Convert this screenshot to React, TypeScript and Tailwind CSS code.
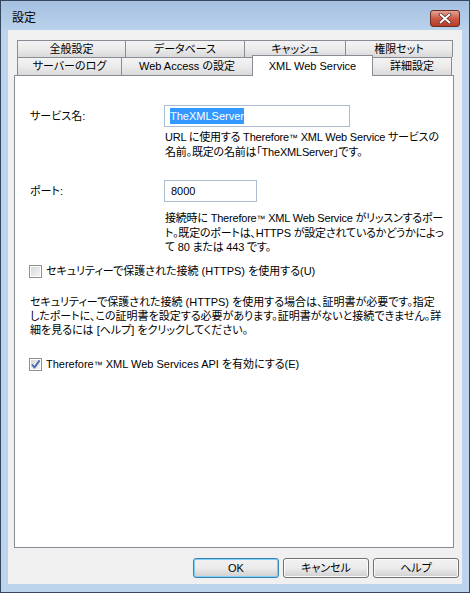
import React from 'react'

const font = { fontFamily: '"Liberation Sans", "Noto Sans CJK JP", sans-serif' }

type Tab = { label: string; w: string; selected?: boolean; last?: boolean }

const row1: Tab[] = [
  { label: '全般設定', w: 'w-[108px]' },
  { label: 'データベース', w: 'w-[119px]' },
  { label: 'キャッシュ', w: 'w-[101px]' },
  { label: '権限セット', w: 'w-[108px]', last: true },
]

const row2: Tab[] = [
  { label: 'サーバーのログ', w: 'w-[104px]' },
  { label: 'Web Access の設定', w: 'w-[131px]' },
  { label: 'XML Web Service', w: 'w-[121px]', selected: true },
  { label: '詳細設定', w: 'w-[80px]', last: true },
]

function TabButton({ tab, h }: { tab: Tab; h: string }) {
  if (tab.selected) {
    return (
      <div
        className={`${tab.w} h-[21px] -mb-px -mr-px relative z-10 flex items-center justify-center border-t border-l border-r border-[#898c95] bg-white text-[11px] text-black`}
      >
        {tab.label}
      </div>
    )
  }
  return (
    <div
      className={`${tab.w} ${h} flex items-center justify-center border-t border-l border-[#898c95] ${tab.last ? 'border-r' : ''} bg-gradient-to-b from-[#f3f3f3] via-[#ebebeb] to-[#d9d9d9] text-[11px] text-black`}
    >
      {tab.label}
    </div>
  )
}

function Checkbox({ checked }: { checked?: boolean }) {
  return (
    <div className="w-[13px] h-[13px] border border-[#8f8f8f] bg-white p-px shrink-0">
      <div className="w-full h-full bg-gradient-to-br from-[#d9d9d9] to-[#f4f4f4] relative">
        {checked && (
          <svg viewBox="0 0 11 11" className="absolute -left-px -top-px w-[11px] h-[11px]">
            <path d="M2 5.5 L4.5 8.5 L9.5 1.5" fill="none" stroke="#2b4f8f" strokeWidth="1.8" strokeLinejoin="round" />
            <path d="M2 5.5 L4.5 8.5 L9.5 1.5" fill="none" stroke="#5b8fd6" strokeWidth="0.8" />
          </svg>
        )}
      </div>
    </div>
  )
}

function DialogButton({ label, primary }: { label: string; primary?: boolean }) {
  return (
    <div
      className={`w-[86px] h-[20px] rounded-[3px] border ${primary ? 'border-[#3c7fb1] shadow-[inset_0_0_0_1px_#7fd0f7]' : 'border-[#707070] shadow-[inset_0_0_0_1px_#fcfcfc]'} bg-gradient-to-b from-[#f2f2f2] via-[#ebebeb] to-[#cfcfcf] flex items-center justify-center text-[11px] text-black`}
    >
      {label}
    </div>
  )
}

const Tm = () => <span className="text-[9px]">™</span>

export default function App() {
  return (
    <div
      style={font}
      className="w-[470px] h-[593px] border border-[#34475e] bg-[#bcd4ec] flex flex-col [font-feature-settings:'palt']"
    >
      {/* Title bar */}
      <div className="h-[29px] flex justify-between bg-gradient-to-b from-[#a5c0e0] to-[#bad2ec]">
        <div className="pl-[11px] pt-[8px] text-[12px] text-black">設定</div>
        <div className="mr-[9px] mt-[9px] w-[30px] h-[17px] rounded-[3px] border border-[#6b2a22] bg-gradient-to-b from-[#e2a594] via-[#cc5a45] to-[#b63d28] flex items-center justify-center">
          <svg viewBox="0 0 14 11" className="w-[14px] h-[11px]">
            <path d="M2.5 1.5 L11.5 9.5 M11.5 1.5 L2.5 9.5" stroke="#5a2a24" strokeWidth="3.6" strokeLinecap="round" />
            <path d="M2.5 1.5 L11.5 9.5 M11.5 1.5 L2.5 9.5" stroke="#ffffff" strokeWidth="2" strokeLinecap="round" />
          </svg>
        </div>
      </div>

      {/* Client area */}
      <div className="mx-[7px] h-[554px] bg-[#f0f0f0] pt-[10px] pl-[6px] flex flex-col">
        <div className="pl-[3px] flex flex-col">
          <div className="flex h-[17px]">
            {row1.map(t => (
              <TabButton key={t.label} tab={t} h="h-[17px]" />
            ))}
          </div>
          <div className="flex items-end h-[18px]">
            {row2.map(t => (
              <TabButton key={t.label} tab={t} h="h-[18px]" />
            ))}
          </div>
        </div>

        {/* Panel */}
        <div className="w-[440px] h-[473px] border border-[#898c95] bg-white pt-[29px] pl-[15px] text-[11px] leading-[14px] text-black">
          <div className="flex items-center">
            <div className="w-[134px]">サービス名:</div>
            <div className="w-[186px] h-[22px] border border-[#abbdd3] flex items-center pl-[5px]">
              <span className="bg-[#3399ff] text-white leading-[16px]">TheXMLServer</span>
            </div>
          </div>
          <div className="ml-[135px] mt-[3px] whitespace-nowrap tracking-[-0.2px]">
            URL に使用する Therefore<Tm /> XML Web Service サービスの
            <br />
            名前。既定の名前は「TheXMLServer」です。
          </div>

          <div className="flex items-center mt-[21px]">
            <div className="w-[134px]">ポート:</div>
            <div className="w-[93px] h-[22px] border border-[#abbdd3] flex items-center pl-[6px]">8000</div>
          </div>
          <div className="ml-[135px] mt-[9px] whitespace-nowrap tracking-[-0.2px]">
            接続時に Therefore<Tm /> XML Web Service がリッスンするポー
            <br />
            ト。既定のポートは、HTTPS が設定されているかどうかによっ
            <br />
            て 80 または 443 です。
          </div>

          <div className="flex items-center gap-[4px] mt-[10px] -ml-px">
            <Checkbox />
            <span>セキュリティーで保護された接続 (HTTPS) を使用する(U)</span>
          </div>

          <div className="mt-[17px] whitespace-nowrap">
            セキュリティーで保護された接続 (HTTPS) を使用する場合は、証明書が必要です。指定
            <br />
            したポートに、この証明書を設定する必要があります。証明書がないと接続できません。詳
            <br />
            細を見るには [ヘルプ] をクリックしてください。
          </div>

          <div className="flex items-center gap-[4px] mt-[20px] -ml-px">
            <Checkbox checked />
            <span>
              Therefore<Tm /> XML Web Services API を有効にする(E)
            </span>
          </div>
        </div>

        {/* Buttons */}
        <div className="flex justify-end gap-[4px] mt-[10px] pr-[3px]">
          <DialogButton label="OK" primary />
          <DialogButton label="キャンセル" />
          <DialogButton label="ヘルプ" />
        </div>
      </div>
    </div>
  )
}
